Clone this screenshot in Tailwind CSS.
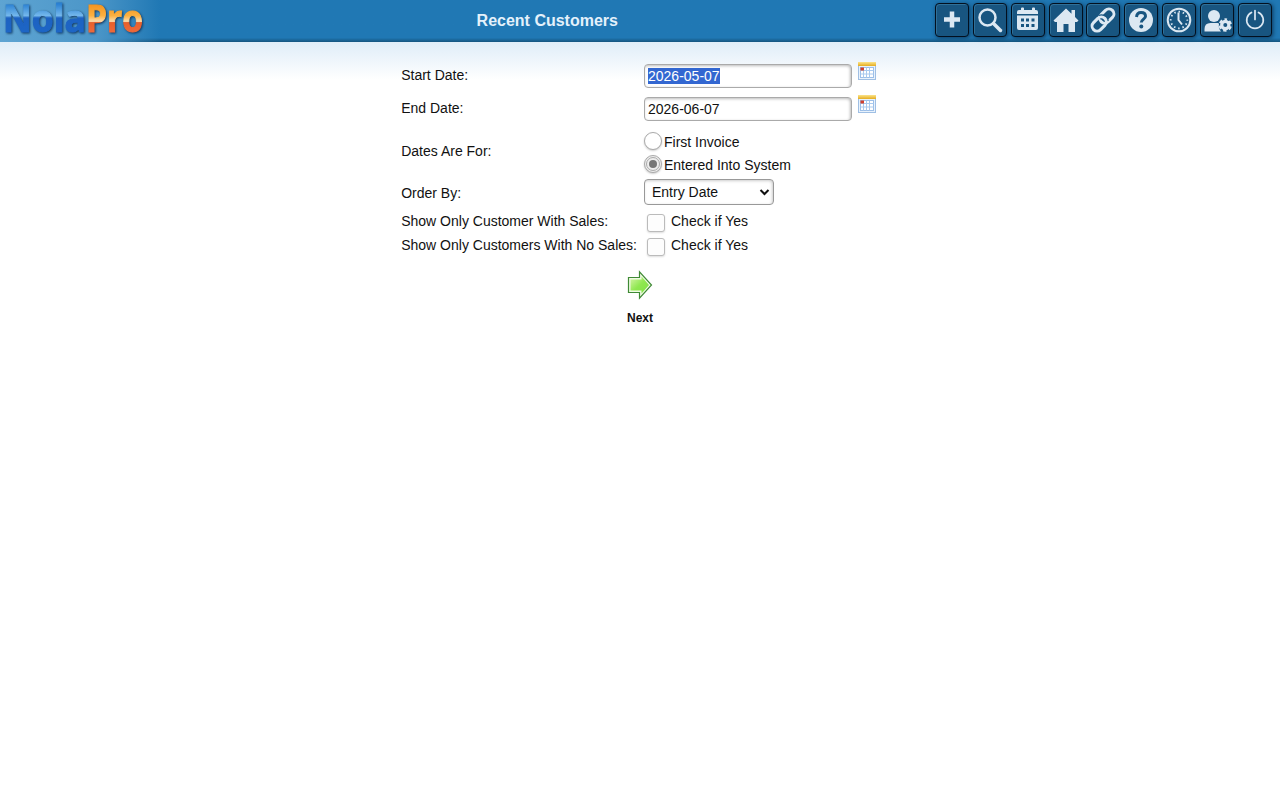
<!DOCTYPE html>
<html lang="en">
<head>
<meta charset="utf-8">
<title>Recent Customers</title>
<script src="https://cdn.jsdelivr.net/npm/@tailwindcss/browser@4"></script>
</head>
<body class="bg-white text-[14px] leading-[16px] text-[#111] font-['Liberation_Sans',Arial,sans-serif]">
<svg width="0" height="0" class="absolute">
  <defs>
    <linearGradient id="blue" gradientUnits="userSpaceOnUse" x1="0" y1="4" x2="0" y2="33"><stop offset="0" stop-color="#2a80d2"/><stop offset=".4" stop-color="#74b8ec"/><stop offset=".48" stop-color="#1d62c2"/><stop offset="1" stop-color="#1d66c6"/></linearGradient>
    <linearGradient id="orange" gradientUnits="userSpaceOnUse" x1="0" y1="4" x2="0" y2="33"><stop offset="0" stop-color="#f5921c"/><stop offset=".4" stop-color="#fbb040"/><stop offset=".6" stop-color="#fbdcae"/><stop offset=".64" stop-color="#e8602c"/><stop offset="1" stop-color="#ee6a3c"/></linearGradient>
    <linearGradient id="gold" x1="0" y1="0" x2="0" y2="1"><stop offset="0" stop-color="#fbe48a"/><stop offset="1" stop-color="#e5ac20"/></linearGradient>
    <linearGradient id="green" x1="0" y1="0" x2="1" y2="1"><stop offset="0" stop-color="#d6f5a8"/><stop offset=".5" stop-color="#8fe850"/><stop offset="1" stop-color="#7fdf45"/></linearGradient>
    <symbol id="cal" viewBox="0 0 18 18">
      <rect x=".5" y=".5" width="17" height="17" fill="#e8f2fc" stroke="#9fbfe4"/>
      <rect width="18" height="4" fill="url(#gold)"/>
      <rect x="2.500" y="5.500" width="13" height="10" fill="#fff" stroke="#9dbfe8"/>
      <path d="M5.500 5.500v10M8.500 5.500v10M11.500 5.500v10M2.500 8.500h13M2.500 12h13" stroke="#a9caef" fill="none"/>
      <rect x="2.500" y="5.500" width="3.500" height="3" fill="#d0402f"/>
    </symbol>
  </defs>
</svg>
<header class="flex h-[42px] bg-linear-to-b from-[#2078b4] from-90% to-[#14557f]">
  <div class="w-[160px] h-[42px] bg-linear-to-r from-[#5ea4d2] via-[#4b96c8] via-60% to-[#2078b4]/0">
    <svg width="160" height="42" class="block overflow-visible drop-shadow-[1px_1px_1px_#123a62]">
      <g font-family="Open Sans" font-weight="700" font-size="37" stroke-width="1">
        <text x="3" y="31.500" textLength="83" lengthAdjust="spacingAndGlyphs" fill="url(#blue)" stroke="url(#blue)">Nola</text>
        <text x="86" y="31.500" textLength="57" lengthAdjust="spacingAndGlyphs" fill="url(#orange)" stroke="url(#orange)">Pro</text>
      </g>
    </svg>
  </div>
  <h1 class="w-[775px] pt-[12px] pl-[316.6px] text-[16px] leading-[18px] font-bold text-[#e4f1fb]">Recent Customers</h1>
  <nav class="flex gap-[3.85px] pt-[3px] [&>a]:size-[34px] [&>a]:shrink-0 [&>a]:rounded-[4px] [&>a]:border [&>a]:border-[#02101f] [&>a]:bg-[#185580] [&>a]:shadow-[inset_1px_1px_0_#2f7099,1px_1px_4px_#0c395c] [&_svg]:size-[32px] [&_svg]:block text-[#dce8f2]">
    <a><svg viewBox="0 0 32 32"><path d="M16 7.500v16M8 15.500h16" stroke="currentColor" stroke-width="4.500"/></svg></a>
    <a><svg viewBox="0 0 32 32" fill="none" stroke="currentColor"><circle cx="13.500" cy="13.500" r="8" stroke-width="2.500"/><path d="M19.500 19.500l7 7" stroke-width="3.500" stroke-linecap="round"/></svg></a>
    <a><svg viewBox="0 0 32 32" fill="currentColor"><path d="M5 10V8q0-2 2-2h2V4.500q0-1 1-1h1q1 0 1 1V6h8V4.500q0-1 1-1h1q1 0 1 1V6h1q2 0 2 2v2zM5 11.500h21V24q0 2-2 2H7q-2 0-2-2z"/><g fill="#185580"><path d="M9 14.500h3v3H9zM14 14.500h3v3h-3zM19.500 14.500h3v3h-3zM9 20h3v3H9zM14 20h3v3h-3zM19.500 20h3v3h-3z"/></g></svg></a>
    <a><svg viewBox="0 0 32 32" fill="currentColor"><path d="M16 4.500l5.500 5.200V6H25v7l3.500 3.500L27 18h-2v10h-6.500v-8h-5v8H7V18H5l-1.500-1.500z"/></svg></a>
    <a><svg viewBox="0 0 32 32" fill="none" stroke="currentColor" stroke-width="3"><rect x="-8" y="-5" width="16" height="10" rx="5" transform="translate(19.800 12) rotate(-45)"/><rect x="-8" y="-5" width="16" height="10" rx="5" transform="translate(12.200 20) rotate(-45)" stroke="#185580" stroke-width="5" stroke-dasharray="9 60" stroke-dashoffset="-8"/><rect x="-8" y="-5" width="16" height="10" rx="5" transform="translate(12.200 20) rotate(-45)"/></svg></a>
    <a><svg viewBox="0 0 32 32"><circle cx="16" cy="16" r="12" fill="currentColor"/><path d="M11.500 13q.5-4.500 4.500-4.500 4.500 0 4.500 3.800c0 2.700-4.200 3-4.200 6.200" fill="none" stroke="#185580" stroke-width="3"/><circle cx="16.300" cy="22.500" r="2" fill="#185580"/></svg></a>
    <a><svg viewBox="0 0 32 32" fill="none" stroke="currentColor"><circle cx="16" cy="16" r="11.300" stroke-width="2"/><circle cx="16" cy="16" r="8.300" stroke-width="1.800" stroke-dasharray="1.500 2.846" stroke-dashoffset=".75"/><path d="M15.500 8.500V16l3.500 4.500" stroke-width="2"/></svg></a>
    <a><svg viewBox="0 0 32 32" fill="currentColor"><circle cx="13" cy="12" r="6"/><path d="M3.500 27.500v-2.500q0-6 6-6h7q1.500 0 1.500 1-1 4 2 7.500z"/><circle cx="24.300" cy="21" r="5.600" fill="none" stroke="currentColor" stroke-width="2.200" stroke-dasharray="3.400 2.465" stroke-dashoffset="1.700" transform="rotate(-90 24.300 21)"/><circle cx="24.300" cy="21" r="3.600" fill="none" stroke="currentColor" stroke-width="3.200"/></svg></a>
    <a><svg viewBox="0 0 32 32" fill="none" stroke="currentColor" stroke-width="1.700" stroke-linecap="round"><path d="M12.500 8.500a8.300 8.300 0 1 0 7 0M16 6.500v9"/></svg></a>
  </nav>
</header>
<main class="h-[758px] bg-linear-to-b from-[#dfedf8] to-white to-[38px] pt-[18px] pl-[401px]">
  <div class="flex h-[33px]">
    <label class="w-[243px] pt-[7px] pl-[0.2px]">Start Date:</label>
    <div class="mt-[4px] w-[208px] h-[24px] rounded-[4px] border border-[#aaa] bg-white pl-[3px] pt-[3px] shadow-[inset_-1px_1px_3px_#bbb]"><span class="bg-[#3367d1] text-white">2026-05-07</span></div>
    <svg class="ml-[6px] mt-[2px] size-[18px]"><use href="#cal"/></svg>
  </div>
  <div class="flex h-[37px]">
    <label class="w-[243px] pt-[7px] pl-[0.2px]">End Date:</label>
    <div class="mt-[4px] w-[208px] h-[24px] rounded-[4px] border border-[#aaa] bg-white pl-[3px] pt-[3px] shadow-[inset_-1px_1px_3px_#bbb]">2026-06-07</div>
    <svg class="ml-[6px] mt-[2px] size-[18px]"><use href="#cal"/></svg>
  </div>
  <div class="flex h-[49px]">
    <label class="w-[243px] pt-[13px] pl-[0.2px]">Dates Are For:</label>
    <div class="pt-[2px]">
      <div class="flex h-[23px]"><i class="size-[18px] mr-[2px] rounded-full border border-[#aaa] bg-white shadow-[0_1px_2px_#ccc]"></i><span class="pt-[2px]">First Invoice</span></div>
      <div class="flex h-[23px]"><i class="size-[18px] mr-[2px] rounded-full border border-[#aaa] bg-[#eee] shadow-[0_1px_2px_#ccc] flex items-center justify-center"><b class="flex size-[14px] items-center justify-center rounded-full border border-[#aaa]"><b class="size-[8px] rounded-full bg-[#777]"></b></b></i><span class="pt-[2px]">Entered Into System</span></div>
    </div>
  </div>
  <div class="flex h-[33px]">
    <label class="w-[243px] pt-[6px] pl-[0.2px]">Order By:</label>
    <div class="flex w-[130px] h-[26px] justify-between rounded-[4px] border border-[#999] bg-white pl-[7px] pr-[3px] pt-[4px] shadow-[inset_-1px_1px_3px_#ccc]">Entry Date<svg width="11" height="16"><path d="M1.500 6l4 4 4-4" fill="none" stroke="#111" stroke-width="2"/></svg></div>
  </div>
  <div class="flex h-[24px]">
    <label class="w-[246px] pt-[1px] pl-[0.2px]">Show Only Customer With Sales:</label>
    <i class="mt-[2px] mr-[6px] size-[18px] rounded-[3px] border border-[#bbb] bg-[#fdfdfd] shadow-[0_1px_2px_#ddd]"></i><span class="pt-[1px]">Check if Yes</span>
  </div>
  <div class="flex h-[24px]">
    <label class="w-[246px] pt-[1px] pl-[0.2px]">Show Only Customers With No Sales:</label>
    <i class="mt-[2px] mr-[6px] size-[18px] rounded-[3px] border border-[#bbb] bg-[#fdfdfd] shadow-[0_1px_2px_#ddd]"></i><span class="pt-[1px]">Check if Yes</span>
  </div>
  <a class="ml-[219px] mt-[10px] flex w-[40px] flex-col items-center text-[12px] leading-[14px] font-bold">
    <svg width="26" height="30"><path d="M1.500 7.500h11V1.800L24.500 15 12.500 28.200v-5.700h-11z" fill="#f0fbe4" stroke="#3f8a35" stroke-width="1.200"/><path d="M3.500 9.500h11V6.500l7.500 8.500-7.500 8.500v-3h-11z" fill="url(#green)"/></svg>
    <span class="mt-[11px]">Next</span>
  </a>
</main>
</body>
</html>
